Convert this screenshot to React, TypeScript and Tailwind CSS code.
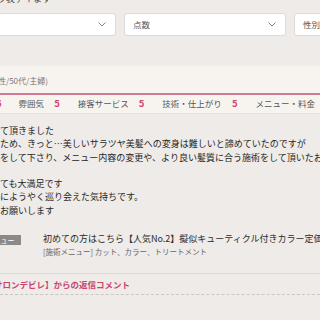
import React from 'react';

const ratings = [
  { label: '雰囲気', score: 5 },
  { label: '接客サービス', score: 5 },
  { label: '技術・仕上がり', score: 5 },
  { label: 'メニュー・料金', score: 5 },
];

const bodyLines = [
  'て頂きました',
  'ため、きっと…美しいサラツヤ美髪への変身は難しいと諦めていたのですが',
  'をして下さり、メニュー内容の変更や、より良い髪質に合う施術をして頂いたおかげで',
  '',
  'ても大満足です',
  'にようやく巡り会えた気持ちです。',
  'お願いします',
];

const Chevron = () => (
  <svg width="8" height="5" viewBox="0 0 8 5" fill="none" className="shrink-0">
    <path d="M0.8 0.8L4 4L7.2 0.8" stroke="#8a8685" strokeWidth="1" strokeLinecap="round" strokeLinejoin="round" />
  </svg>
);

const App: React.FC = () => {
  return (
    <div className="w-[320px] h-[320px] overflow-hidden bg-[#eeebe9] text-[#333] font-['Noto_Sans_CJK_JP','Noto_Sans',sans-serif]">
      {/* Filter head */}
      <div className="h-[66px] overflow-hidden">
        <p className="-mt-[7px] -ml-[3px] text-[9px] leading-[12px] text-[#444] whitespace-nowrap">
          ウ表ァイます
        </p>
        <div className="mt-[8px] -ml-[46px] flex gap-2">
          <div className="w-[162px] h-[23px] shrink-0 bg-white border border-[#dedad7] rounded-[3px] flex items-center justify-between pl-2 pr-[9px] text-[8.5px] text-[#555]">
            <span>並び順</span>
            <Chevron />
          </div>
          <div className="w-[162px] h-[23px] shrink-0 bg-white border border-[#dedad7] rounded-[3px] flex items-center justify-between pl-2 pr-[9px] text-[8.5px] text-[#555]">
            <span>点数</span>
            <Chevron />
          </div>
          <div className="w-[162px] h-[23px] shrink-0 bg-white border border-[#dedad7] rounded-[3px] flex items-center justify-between pl-2 pr-[9px] text-[8.5px] text-[#555]">
            <span>性別</span>
            <Chevron />
          </div>
        </div>
      </div>

      {/* Reviewer header */}
      <div className="bg-[#f7f4ef] h-[47px]">
        <p className="pt-[9px] -ml-[2px] text-[8px] leading-[12px] text-[#777] whitespace-nowrap">
          性/50代/主婦)
        </p>
        <div className="mt-[6px] h-[1.5px] bg-[#d27894]" />
        <div className="h-[18px] flex items-center whitespace-nowrap text-[8.5px] text-[#555]">
          <span className="-ml-[4px] w-[6px] font-bold text-[9.5px] text-[#d1466f]">5</span>
          {ratings.map((r, i) => (
            <React.Fragment key={r.label}>
              <span className={i === 0 ? 'ml-[17px]' : 'ml-[10px]'}>{r.label}</span>
              <span className="ml-[10px] font-bold text-[9.5px] text-[#d1466f]">{r.score}</span>
              <span className="ml-[8px] w-px h-[11px] bg-[#666]" />
            </React.Fragment>
          ))}
        </div>
      </div>

      {/* Review body */}
      <div className="pt-[10px] border-t border-[#e6e2df]">
        <div className="text-[9px] leading-[13.3px] text-[#262626] whitespace-nowrap">
          {bodyLines.map((line, i) => (
            <p key={i} className="h-[13.3px]">{line}</p>
          ))}
        </div>

        {/* Menu */}
        <div className="mt-[16px] flex items-start whitespace-nowrap">
          <div className="mt-[2px] -ml-[20px] w-[41px] h-[10px] shrink-0 bg-[#8c8a89] text-white text-[7px] leading-[10px] text-center">
            メニュー
          </div>
          <div className="ml-[22px]">
            <p className="text-[9px] leading-[12px] text-[#2b2b2b]">
              初めての方はこちら【人気No.2】擬似キューティクル付きカラー定価12000円
            </p>
            <p className="mt-[1px] text-[7.5px] leading-[12px] text-[#666]">
              [施術メニュー] カット、カラー、トリートメント
            </p>
          </div>
        </div>

        <div className="mt-[15px] h-px bg-[#dcd8d5]" />
        <p className="mt-[4px] -ml-[6px] text-[8.5px] leading-[12px] font-bold text-[#c9456e] whitespace-nowrap">
          サロンデビレ】からの返信コメント
        </p>
        <div className="mt-[4px] border-t border-dashed border-[#cbc7c4]" />
      </div>
    </div>
  );
};

export default App;
